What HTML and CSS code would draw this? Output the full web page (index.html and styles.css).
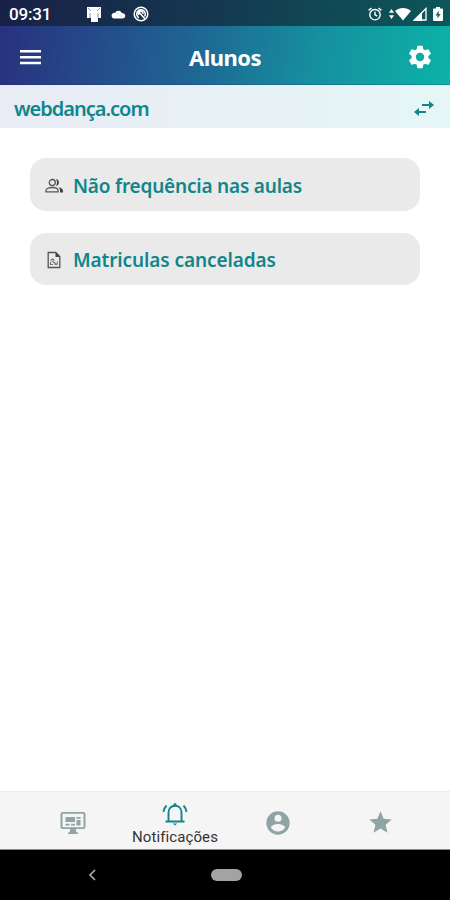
FILE: index.html
```html
<!DOCTYPE html>
<html lang="pt-BR">
<head>
    <meta charset="UTF-8">
    <meta name="viewport" content="width=device-width, initial-scale=1.0">
    <title>Alunos</title>
    <link rel="stylesheet" href="styles.css">
</head>
<body>
    <div class="top">
        <div class="status-bar">
            <span class="clock">09:31</span>
            <div class="status-left">
                <svg width="16" height="16" viewBox="0 0 16 16"><path fill="#fff" d="M1 1h14v11h-3v4H5v-4H1z"/><path d="M2 2l3 3M14 2l-3 3M4 7v5M12 7v5" stroke="#8a96ab" fill="none"/></svg>
                <svg width="16" height="16" viewBox="0 0 16 16"><path fill="#fff" d="M3.500 12.500a3 3 0 0 1-.3-5.500c.8-.4 1.500-.3 2-.1C6 4.300 10.500 3.600 11.700 7c2 0 3.600 1.100 3.600 2.800 0 1.600-1.200 2.700-2.800 2.700z"/><path d="M6 7.500l6 3" stroke="#dde0e8"/></svg>
                <svg width="16" height="16" viewBox="0 0 16 16" fill="none" stroke="#fff"><circle cx="8" cy="8" r="6.800" stroke-width="1.500"/><path d="M11.500 10.500A4.300 4.300 0 1 0 6 11.800M5 5l7 8M6 9a2.300 2.300 0 1 1 4-1" stroke-width="1.500"/></svg>
            </div>
            <div class="status-right">
                <svg class="alarm" width="14" height="14" viewBox="0 0 14 14" fill="none" stroke="#fff" stroke-width="1.400"><circle cx="7" cy="7.700" r="5.200"/><path d="M7 4.700v3.200l2.300 1.300M.6 3.400L3.500 1M13.400 3.400L10.500 1"/></svg>
                <svg class="arrows" width="5" height="12" viewBox="0 0 6 12" fill="#fff"><path d="M3 0l3 4.500H0zM3 12L0 7.500h6z"/></svg>
                <svg class="wifi" width="16" height="14" viewBox="0 0 16 14" fill="#fff"><path d="M8 13.500L0 4c4.500-4 11.500-4 16 0z"/></svg>
                <svg class="signal" width="14" height="14" viewBox="0 0 14 14"><path d="M13 1.500V13H1.500z" fill="none" stroke="#fff" stroke-width="1.300"/><path d="M0 14L9 5v9z" fill="#fff"/></svg>
                <svg class="battery" width="10" height="14" viewBox="0 0 10 14"><path fill="#fff" d="M3 0h4v1.500h2q1 0 1 1V13q0 1-1 1H1q-1 0-1-1V2.500q0-1 1-1h2z"/><path fill="#206365" d="M5.800 3.500L2.500 8.500h2v3L7.700 7h-2z"/></svg>
            </div>
        </div>
        <header class="header">
            <svg width="22" height="16" viewBox="0 0 22 16" fill="#fff"><path d="M0 1h21v2.500H0zM0 6.900h21v2.500H0zM0 12.800h21v2.500H0z"/></svg>
            <h1>Alunos</h1>
            <svg class="gear" width="28" height="28" viewBox="0 0 24 24" fill="#fff"><path d="M19.140 12.940c.04-.3.060-.61.060-.94 0-.32-.02-.64-.07-.94l2.030-1.580c.18-.14.230-.41.120-.61l-1.920-3.320c-.12-.22-.37-.29-.59-.22l-2.390.96c-.5-.38-1.030-.7-1.620-.94l-.36-2.540c-.04-.24-.24-.41-.48-.41h-3.840c-.24 0-.43.170-.47.410l-.36 2.540c-.59.240-1.130.57-1.620.94l-2.390-.96c-.22-.08-.47 0-.59.220L2.740 8.870c-.12.210-.08.470.12.610l2.030 1.580c-.05.3-.09.630-.09.940s.02.640.07.940l-2.030 1.580c-.18.140-.23.410-.12.610l1.920 3.320c.12.220.37.290.59.220l2.390-.96c.5.380 1.030.7 1.620.94l.36 2.540c.05.240.24.410.48.410h3.840c.24 0 .44-.17.470-.41l.36-2.540c.59-.24 1.130-.56 1.620-.94l2.390.96c.22.080.47 0 .59-.22l1.920-3.320c.12-.22.070-.47-.12-.61l-2.010-1.580zM12 15.600A3.600 3.600 0 1 1 12 8.400a3.600 3.600 0 0 1 0 7.200z"/></svg>
        </header>
    </div>
    <div class="account">
        <span class="account-name">webdança.com</span>
        <svg width="20" height="15" viewBox="0 0 20 15" fill="#10868a"><path d="M8 3.100h7V0l5 4-5 4V5H8zM12 10H5V7l-5 4 5 4v-3.100h7z"/></svg>
    </div>
    <main class="list">
        <a class="card">
            <svg width="18" height="16" viewBox="0 0 18 16"><g fill="none" stroke="#555" stroke-width="1.300"><circle cx="7.300" cy="4.500" r="3"/><path d="M1 13.800v-1.300C1 10.300 5 9.500 7.300 9.500s5.700.8 5.700 3v1.300z"/></g><path fill="#444" d="M11 1.100a3.500 3.500 0 0 1 0 6.900c1.300-2 1.300-4.900 0-6.900zM13.500 9.300c2.600.5 4.500 1.600 4.500 3.400v1.700h-3v-1.700c0-1.400-.5-2.500-1.500-3.400z"/></svg>
            <span class="card-title absence">Não frequência nas aulas</span>
        </a>
        <a class="card">
            <svg width="18" height="18" viewBox="0 0 18 18"><path d="M3.200 1.500h7.600l4 4v11H3.200z" fill="none" stroke="#555" stroke-width="1.300"/><path d="M10.500 1v5H15z" fill="#444"/><path d="M5.500 9.500l2-1.500 2 1.500M5.500 11v2.500h2.500M9.500 13.500h2.500l.5-3M7 10l4 3" fill="none" stroke="#777" stroke-width="1.200"/></svg>
            <span class="card-title canceled">Matriculas canceladas</span>
        </a>
    </main>
    <nav class="tabs">
        <a class="tab">
            <svg width="26" height="24" viewBox="0 0 26 24" fill="#90a4a6"><path fill-rule="evenodd" d="M2.500 1h21q2 0 2 2v13q0 2-2 2H16v2.500l2 1.500v1H8v-1l2-1.500V18H2.500q-2 0-2-2V3q0-2 2-2zm0 1.700v13.600h21V2.700z"/><path d="M5.500 6H15v5H5.500zM16.500 6h4v1.700h-4zM16.500 9h4v5.500h-4zM5.500 12.700h4v1.800h-4zM11 12.700h4v1.800h-4z"/></svg>
        </a>
        <a class="tab active">
            <svg width="26" height="24" viewBox="0 0 26 24" fill="none" stroke="#10868a" stroke-width="1.900"><path d="M6.500 19V10.500C6.500 6.500 9.200 3.800 13 3.800s6.500 2.700 6.500 6.700V19M3.500 19.500h19M4.500 3.500C2.800 5.200 2 7 1.500 9.800M21.500 3.500c1.700 1.700 2.500 3.500 3 6.300"/><path d="M10.800 21.500h4.400L13 23.500zM11.500 4V2.500a1.500 1.500 0 0 1 3 0V4z" fill="#10868a" stroke="none"/></svg>
            <span class="tab-label">Notificações</span>
        </a>
        <a class="tab">
            <svg width="28" height="28" viewBox="0 0 24 24" fill="#90a4a6"><path d="M12 2a10 10 0 1 0 0 20 10 10 0 0 0 0-20zm0 3a3 3 0 1 1 0 6 3 3 0 0 1 0-6zm0 14.200c-2.500 0-4.710-1.280-6-3.220.03-1.990 4-3.080 6-3.080s5.970 1.090 6 3.080a7.200 7.200 0 0 1-6 3.220z"/></svg>
        </a>
        <a class="tab">
            <svg width="27" height="27" viewBox="0 0 24 24" fill="#90a4a6"><path d="M12 17.270L18.180 21l-1.640-7.030L22 9.240l-7.190-.61L12 2 9.190 8.630 2 9.240l5.460 4.730L5.820 21z"/></svg>
        </a>
    </nav>
    <footer class="system-nav">
        <svg width="8" height="12" viewBox="0 0 8 12" fill="none" stroke="#aaa" stroke-width="1.700"><path d="M7 1L2 6l5 5"/></svg>
        <span class="home-pill"></span>
    </footer>
</body>
</html>
```
FILE: styles.css
```css
:root {
    --teal: #10868a;
    --title-font: "Noto Sans", "Open Sans", sans-serif;
}
* {
    box-sizing: border-box;
}
body {
    margin: 0;
    height: 900px;
    display: flex;
    flex-direction: column;
    background: #fff;
    font-family: Roboto, sans-serif;
    overflow: hidden;
}
svg {
    display: block;
    flex-shrink: 0;
}
.top {
    height: 85px;
    background: linear-gradient(98deg, #29307e 0%, #1f6593 43%, #168f9f 70%, #0bb3a8 100%);
}
.status-bar {
    height: 26px;
    display: flex;
    align-items: center;
    padding: 1px 7px 0 9px;
    background: rgba(14, 20, 31, 0.58);
    color: #fff;
}
.clock {
    width: 77px;
    font-size: 17px;
    font-weight: 500;
    letter-spacing: -0.2px;
}
.status-left {
    display: flex;
    gap: 7.5px;
}
.status-right {
    display: flex;
    align-items: center;
    margin-left: auto;
}
.arrows {
    margin-left: 7px;
}
.wifi {
    margin-left: 1px;
}
.signal {
    margin-left: 2px;
}
.battery {
    margin-left: 6px;
}
.header {
    height: 59px;
    display: flex;
    align-items: center;
    justify-content: space-between;
    padding: 3px 16px 0 20px;
    border-bottom: 1px solid rgba(35, 30, 105, 0.25);
}
h1 {
    margin: 0 0 0 2px;
    color: #fff;
    font-family: var(--title-font);
    font-size: 22px;
    font-weight: 700;
    line-height: 28px;
    letter-spacing: -0.5px;
}
.account {
    height: 43px;
    display: flex;
    align-items: center;
    justify-content: space-between;
    padding: 4px 16px 0 14px;
    background: linear-gradient(90deg, #e9ecf5, #e6f2f6 60%, #e6f6f5);
}
.account-name {
    color: var(--teal);
    font-family: var(--title-font);
    font-size: 20px;
    font-weight: 600;
    letter-spacing: -1px;
}
.list {
    flex: 1;
    display: flex;
    flex-direction: column;
    gap: 22px;
    padding: 30px 30px 0;
}
.card {
    height: 52.5px;
    display: flex;
    align-items: center;
    gap: 10px;
    padding: 3px 15px 0;
    border-radius: 16px;
    background: #eaeaea;
}
.card-title {
    color: var(--teal);
    font-family: var(--title-font);
    font-size: 19px;
    font-weight: 600;
    white-space: nowrap;
}
.absence {
    letter-spacing: -0.2px;
}
.canceled {
    letter-spacing: -0.1px;
}
.tabs {
    height: 59px;
    display: flex;
    padding: 4px 19px 0 22px;
    background: #f5f5f5;
    border-top: 1px solid #ededed;
    border-bottom: 1px solid #888;
}
.tab {
    flex: 1;
    display: flex;
    flex-direction: column;
    align-items: center;
    justify-content: center;
}
.tab-label {
    margin-top: 2px;
    color: #333;
    font-size: 15px;
    line-height: 18px;
    letter-spacing: 0.1px;
}
.active {
    padding: 3px 1px 0 0;
}
.system-nav {
    height: 50px;
    display: flex;
    align-items: center;
    padding-left: 88px;
    background: #000;
}
.home-pill {
    width: 31px;
    height: 12px;
    margin-left: 115px;
    border-radius: 6px;
    background: #a3a3a3;
}
```
